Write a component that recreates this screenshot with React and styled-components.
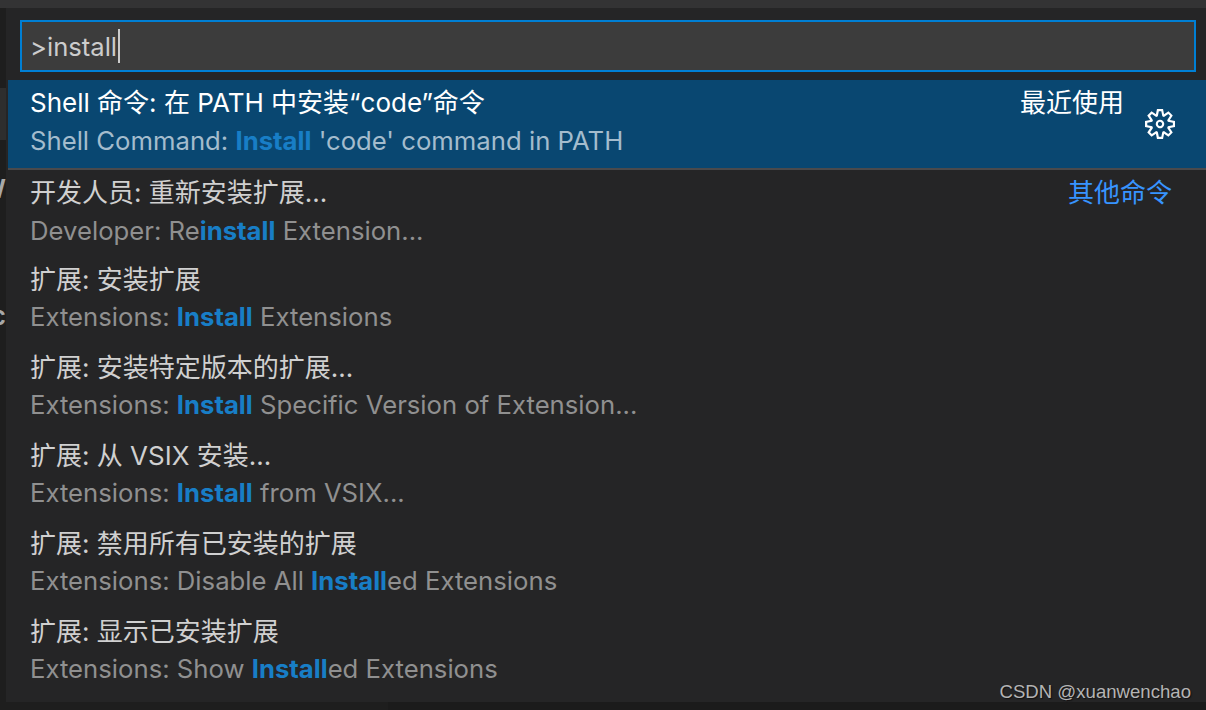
import React from 'react'
import styled, { createGlobalStyle } from 'styled-components'
import { VscSettingsGear } from 'react-icons/vsc'

const COLORS = {
  PANEL: '#252526',
  INPUT: '#3c3c3c',
  FOCUS: '#007fd4',
  SELECTED: '#094771',
  SEPARATOR: '#4a4a4c',
  MATCH: '#187ec6',
  LINK: '#3794ff',
}

const FONT = `Inter, 'Noto Sans CJK SC', sans-serif`

const GlobalStyle = createGlobalStyle`
  html, body {
    margin: 0;
    padding: 0;
    background: #1e1e1e;
  }
`

const Page = styled.div`
  position: relative;
  display: flex;
  flex-direction: column;
  width: 1206px;
  height: 710px;
  overflow: hidden;
  background: #1e1e1e;
  font-family: ${FONT};
`

const TopStrip = styled.div`
  flex: none;
  height: 8px;
  background: #333334;
`

const Middle = styled.div`
  display: flex;
  flex: none;
  height: 694px;
`

const LeftStrip = styled.div`
  flex: none;
  width: 6px;
  overflow: hidden;
  display: flex;
  flex-direction: column;
`

const Tab = styled.div`
  flex: none;
  height: 52px;
  margin-top: 80px;
  margin-bottom: 36px;
  background: #2e2e2e;
`

const PeekGlyph = styled.div`
  flex: none;
  height: ${props => props.$rowHeight}px;
  width: 6px;
  font-size: 26px;
  line-height: 26px;
  font-weight: 600;
  color: #a8a8a8;
  direction: rtl;
  white-space: nowrap;
`

const Panel = styled.div`
  flex: 1 1 auto;
  background: ${COLORS.PANEL};
  display: flex;
  flex-direction: column;
  padding-left: 2px;
`

const InputWrap = styled.div`
  flex: none;
  height: 72px;
  padding: 12px 10px 8px 12px;
  box-sizing: border-box;
`

const Input = styled.div`
  height: 52px;
  box-sizing: border-box;
  background: ${COLORS.INPUT};
  border: 2px solid ${COLORS.FOCUS};
  padding-left: 8px;
  display: flex;
  align-items: center;
  font-size: 25.6px;
  color: #cccccc;
`

const Caret = styled.span`
  width: 2px;
  height: 34px;
  margin-left: 1px;
  background: #cccccc;
`

const Row = styled.div`
  height: 88px;
  box-sizing: border-box;
  display: flex;
  padding: 4px 0 0 22px;
  border-top: ${props =>
    props.$separated ? `2px solid ${COLORS.SEPARATOR}` : 'none'};
  background: ${props => (props.$selected ? COLORS.SELECTED : 'transparent')};
`

const Labels = styled.div`
  flex: 1 1 auto;
  min-width: 0;
`

const Title = styled.div`
  height: 38px;
  line-height: ${props => (props.$low ? '40px' : '38px')};
  font-size: 26px;
  white-space: nowrap;
  color: ${props => (props.$selected ? '#ffffff' : '#d0d0d0')};
`

const Detail = styled.div`
  height: 38px;
  line-height: 38px;
  font-size: 25.7px;
  white-space: nowrap;
  color: ${props => (props.$selected ? '#a4bccd' : '#909090')};
`

const Match = styled.span`
  font-weight: 700;
  color: ${COLORS.MATCH};
`

const Side = styled.div`
  flex: none;
  height: 38px;
  line-height: 38px;
  font-size: 26px;
  white-space: nowrap;
  color: ${props => (props.$link ? COLORS.LINK : '#ffffff')};
  margin-right: ${props => (props.$link ? '34px' : '20px')};
`

const GearButton = styled.div`
  flex: none;
  width: 32px;
  height: 32px;
  margin: 24px 30px 0 0;
  color: #ffffff;
  display: flex;
  align-items: center;
  justify-content: center;
`

const BottomStrip = styled.div`
  flex: none;
  height: 8px;
  display: flex;
`

const BottomLeft = styled.div`
  width: 388px;
  background: #1e1e1e;
`

const BottomRight = styled.div`
  flex: 1 1 auto;
  background: #1b1b1b;
`

const Watermark = styled.div`
  position: absolute;
  right: 15px;
  bottom: 6px;
  font-family: 'Liberation Sans', sans-serif;
  font-size: 18.6px;
  line-height: 24px;
  color: #b4b4b4;
  text-shadow: 1px 1px 1px #111111;
`

const ITEMS = [
  { title: '开发人员: 重新安装扩展...', detail: ['Developer: Re', 'install', ' Extension...'], side: '其他命令', separated: true },
  { title: '扩展: 安装扩展', detail: ['Extensions: ', 'Install', ' Extensions'] },
  { title: '扩展: 安装特定版本的扩展...', detail: ['Extensions: ', 'Install', ' Specific Version of Extension...'] },
  { title: '扩展: 从 VSIX 安装...', detail: ['Extensions: ', 'Install', ' from VSIX...'] },
  { title: '扩展: 禁用所有已安装的扩展', detail: ['Extensions: Disable All ', 'Install', 'ed Extensions'] },
  { title: '扩展: 显示已安装扩展', detail: ['Extensions: Show ', 'Install', 'ed Extensions'] },
]

const Item = ({ item }) => (
  <Row $separated={item.separated}>
    <Labels>
      <Title $low={!item.separated}>{item.title}</Title>
      <Detail>
        {item.detail[0]}
        <Match>{item.detail[1]}</Match>
        {item.detail[2]}
      </Detail>
    </Labels>
    {item.side && <Side $link>{item.side}</Side>}
  </Row>
)

export default function App() {
  return (
    <Page>
      <GlobalStyle />
      <TopStrip />
      <Middle>
        <LeftStrip>
          <Tab />
          <PeekGlyph $rowHeight={127}>W</PeekGlyph>
          <PeekGlyph $rowHeight={30}>c</PeekGlyph>
        </LeftStrip>
        <Panel>
          <InputWrap>
            <Input>
              &gt;install
              <Caret />
            </Input>
          </InputWrap>
          <Row $selected>
            <Labels>
              <Title $selected>Shell 命令: 在 PATH 中安装“code”命令</Title>
              <Detail $selected>
                Shell Command: <Match>Install</Match> 'code' command in PATH
              </Detail>
            </Labels>
            <Side>最近使用</Side>
            <GearButton>
              <VscSettingsGear size={30} />
            </GearButton>
          </Row>
          {ITEMS.map(item => (
            <Item key={item.title} item={item} />
          ))}
        </Panel>
      </Middle>
      <BottomStrip>
        <BottomLeft />
        <BottomRight />
      </BottomStrip>
      <Watermark>CSDN @xuanwenchao</Watermark>
    </Page>
  )
}
